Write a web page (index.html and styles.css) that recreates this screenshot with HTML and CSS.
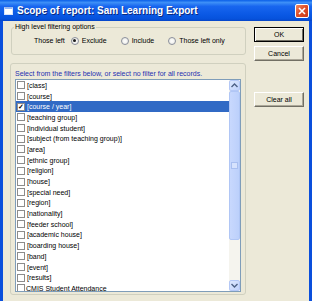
FILE: index.html
```html
<html>
	<head>
		<meta charset="utf-8">
		<link rel="stylesheet" href="styles.css">
	</head>
	<body>
	<div class="window">
		<div class="titlebar">
			<span class="app-icon"></span>
			<span class="title">Scope of report: Sam Learning Export</span>
			<span class="close">
				<svg width="8" height="8" viewBox="0 0 8 8"><path d="M1 1 L7 7 M7 1 L1 7" stroke="#fff" stroke-width="1.6" fill="none"/></svg>
			</span>
		</div>
		<div class="frame">
			<div class="main">
				<fieldset class="options">
					<legend>High level filtering options</legend>
					<div class="radio-row">
						<span class="lead">Those left</span>
						<span class="radio on"></span><span class="rlabel">Exclude</span>
						<span class="radio"></span><span class="rlabel">Include</span>
						<span class="radio"></span><span class="rlabel">Those left only</span>
					</div>
				</fieldset>
				<div class="filters">
					<div class="hint">Select from the filters below, or select no filter for all records.</div>
					<div class="listbox">
						<div class="rows">
							<div class="row"><span class="chk"></span>[class]</div>
							<div class="row"><span class="chk"></span>[course]</div>
							<div class="row sel"><span class="chk on">&#10003;</span>[course / year]</div>
							<div class="row"><span class="chk"></span>[teaching group]</div>
							<div class="row"><span class="chk"></span>[individual student]</div>
							<div class="row"><span class="chk"></span>[subject (from teaching group)]</div>
							<div class="row"><span class="chk"></span>[area]</div>
							<div class="row"><span class="chk"></span>[ethnic group]</div>
							<div class="row"><span class="chk"></span>[religion]</div>
							<div class="row"><span class="chk"></span>[house]</div>
							<div class="row"><span class="chk"></span>[special need]</div>
							<div class="row"><span class="chk"></span>[region]</div>
							<div class="row"><span class="chk"></span>[nationality]</div>
							<div class="row"><span class="chk"></span>[feeder school]</div>
							<div class="row"><span class="chk"></span>[academic house]</div>
							<div class="row"><span class="chk"></span>[boarding house]</div>
							<div class="row"><span class="chk"></span>[band]</div>
							<div class="row"><span class="chk"></span>[event]</div>
							<div class="row"><span class="chk"></span>[results]</div>
							<div class="row tight"><span class="chk"></span>CMIS Student Attendance</div>
						</div>
						<div class="scrollbar">
							<div class="sb-btn">
								<svg width="7" height="5" viewBox="0 0 7 5"><path d="M0.5 4 L3.5 1 L6.5 4" stroke="#4d6185" stroke-width="1.4" fill="none"/></svg>
							</div>
							<div class="sb-thumb"><span class="grip"></span></div>
							<div class="sb-track"></div>
							<div class="sb-btn">
								<svg width="7" height="5" viewBox="0 0 7 5"><path d="M0.5 1 L3.5 4 L6.5 1" stroke="#4d6185" stroke-width="1.4" fill="none"/></svg>
							</div>
						</div>
					</div>
				</div>
			</div>
			<div class="actions">
				<button class="btn default">OK</button>
				<button class="btn cancel">Cancel</button>
				<button class="btn clear">Clear all</button>
			</div>
		</div>
	</div>
	</body>
</html>
```

FILE: styles.css
```css
body {
	margin: 0;
	width: 312px;
	height: 301px;
	overflow: hidden;
	font-family: "Liberation Sans", Arial, sans-serif;
	font-size: 7px;
	color: #000;
}
.window {
	height: 301px;
	display: flex;
	flex-direction: column;
	background-color: #ece9d8;
}
.titlebar {
	height: 21px;
	display: flex;
	align-items: center;
	padding: 0 3px 0 4px;
	background: linear-gradient(#0a5fe8, #3d8ff7 12%, #1866ef 30%, #0a58e4 70%, #0652dc 90%, #0545c8);
	color: white;
}
.app-icon {
	width: 9px;
	height: 8px;
	margin-top: 1px;
	border: 1px solid #d8e4fb;
	border-top: 2px solid #9ab8ef;
	background-color: #fff;
	box-sizing: border-box;
}
.title {
	flex: 1;
	margin-left: 4px;
	font-size: 10px;
	font-weight: bold;
	letter-spacing: 0;
	text-shadow: 1px 1px 0 #0a2a80;
}
.close {
	width: 14px;
	height: 14px;
	box-sizing: border-box;
	border: 1px solid #fff;
	border-radius: 2px;
	background: linear-gradient(135deg, #f08a64, #e0502a 45%, #c8391a);
	display: flex;
	align-items: center;
	justify-content: center;
	margin-top: 1px;
}
.frame {
	flex: 1;
	display: flex;
	border-left: 3px solid #0a4fdc;
	border-right: 3px solid #0a4fdc;
	padding-left: 7px;
}
.main {
	width: 236px;
	display: flex;
	flex-direction: column;
}
.options {
	margin: 2px 0 0 1px;
	padding: 0 0 9px 0;
	border: 1px solid #d0d0bf;
	border-radius: 3px;
	min-width: 0;
}
.options legend {
	margin-left: 2px;
	padding: 0 1px;
	line-height: 8px;
	font-size: 7px;
}
.radio-row {
	margin-top: 5px;
	height: 9px;
	display: flex;
	align-items: center;
	padding-left: 22px;
}
.lead {
	margin-right: 6px;
}
.radio {
	width: 8px;
	height: 8px;
	box-sizing: border-box;
	border: 1px solid #8a8f9c;
	border-radius: 50%;
	background: radial-gradient(#ffffff, #e6e6e0);
	margin-right: 3px;
	display: flex;
	align-items: center;
	justify-content: center;
}
.radio.on::after {
	content: "";
	width: 3px;
	height: 3px;
	border-radius: 50%;
	background-color: #1b1b1b;
}
.rlabel {
	margin-right: 14px;
}
.filters {
	margin-top: 8px;
	height: 232px;
	box-sizing: border-box;
	border: 1px solid #d0d0bf;
	border-radius: 3px;
	padding: 5px 4px 2px 4px;
	display: flex;
	flex-direction: column;
}
.hint {
	height: 10px;
	line-height: 10px;
	color: #1f2fb0;
	white-space: nowrap;
}
.listbox {
	height: 213px;
	box-sizing: border-box;
	border: 1px solid #7f9db9;
	background-color: #fff;
	display: flex;
	overflow: hidden;
}
.rows {
	width: 213px;
	display: flex;
	flex-direction: column;
	overflow: hidden;
}
.row {
	flex: 0 0 10.7px;
	height: 10.7px;
	display: flex;
	align-items: center;
	white-space: nowrap;
}
.row.sel {
	background-color: #316ac5;
	color: #fff;
}
.chk {
	width: 8px;
	height: 8px;
	box-sizing: border-box;
	border: 1px solid #8c8c8c;
	background-color: #fff;
	margin: 0 2px 0 1px;
	font-size: 7px;
	line-height: 6px;
	color: #000;
	text-align: center;
	font-weight: bold;
}
.row.tight .chk {
	margin-right: 1px;
}
.scrollbar {
	width: 11px;
	display: flex;
	flex-direction: column;
	background-color: #f5f4ee;
}
.sb-btn {
	height: 11px;
	box-sizing: border-box;
	border: 1px solid #b4c8f6;
	border-radius: 2px;
	background: linear-gradient(135deg, #dde8fe, #c0d2fb);
	display: flex;
	align-items: center;
	justify-content: center;
}
.sb-thumb {
	height: 149px;
	box-sizing: border-box;
	border: 1px solid #b0c6f5;
	border-radius: 2px;
	background: linear-gradient(90deg, #c8d8fd, #bcd0fb);
	display: flex;
	align-items: center;
	justify-content: center;
}
.grip {
	width: 5px;
	height: 5px;
	border: 1px solid #a9bff0;
	background-color: #d6e2fd;
}
.sb-track {
	flex: 1;
}
.actions {
	width: 50px;
	margin-left: 8px;
	display: flex;
	flex-direction: column;
}
.btn {
	width: 50px;
	height: 15px;
	padding: 0;
	font-family: "Liberation Sans", Arial, sans-serif;
	font-size: 7px;
	color: #000;
	background-color: #ece9d8;
	border: 1px solid;
	border-color: #fff #716f64 #716f64 #fff;
	box-shadow: inset -1px -1px 0 #aca899;
}
.btn.default {
	margin-top: 6px;
	border: 1px solid #000;
	box-shadow: inset 1px 1px 0 #fff, inset -1px -1px 0 #716f64;
}
.btn.cancel {
	margin-top: 4px;
}
.btn.clear {
	margin-top: 31px;
}
```
